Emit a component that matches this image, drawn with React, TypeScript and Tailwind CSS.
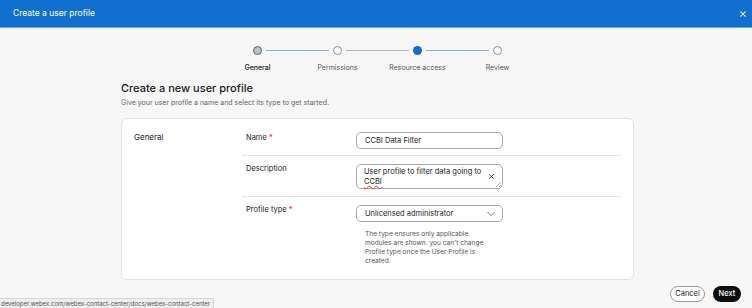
import React from "react";

const font = "font-['Inter','Noto_Sans',sans-serif]";

function Stepper() {
  const labels = [
    { t: "General", active: true },
    { t: "Permissions", active: false },
    { t: "Resource access", active: false },
    { t: "Review", active: false },
  ];
  return (
    <div className="flex flex-col items-center pt-[17px] pl-[3px]">
      <div className="flex items-center h-[10px]">
        <div className="w-[9px] h-[9px] rounded-full bg-[#b9c0ca] border border-[#5d6470]" />
        <div className="w-[63px] h-px bg-[#86aed8] mx-[4px]" />
        <div className="w-[9px] h-[9px] rounded-full bg-white border border-[#8c8c8c]" />
        <div className="w-[63px] h-px bg-[#b5b5b5] mx-[4px]" />
        <div className="w-[9px] h-[9px] rounded-full bg-[#1170cf]" />
        <div className="w-[63px] h-px bg-[#86aed8] mx-[4px]" />
        <div className="w-[9px] h-[9px] rounded-full bg-white border border-[#8c8c8c]" />
      </div>
      <div className="flex mt-[8px]">
        {labels.map((l) => (
          <div
            key={l.t}
            className={`w-[80px] text-center text-[7px] leading-[9px] ${
              l.active ? "text-[#1a1a1a] font-medium" : "text-[#555]"
            }`}
          >
            {l.t}
          </div>
        ))}
      </div>
    </div>
  );
}

export default function App() {
  return (
    <div className={`relative w-[752px] h-[308px] overflow-hidden bg-[#f7f7f7] ${font}`}>
      <div className="h-[28px] bg-[#1170cf] border-b border-[#6aa8e6] flex items-center justify-between pl-[13px] pr-[5px]">
        <span className="text-white text-[8.5px] leading-none">Create a user profile</span>
        <svg width="8" height="8" viewBox="0 0 10 10" className="mt-[1px]">
          <path d="M2 2 L8 8 M8 2 L2 8" stroke="#dbe9f8" strokeWidth="1.3" strokeLinecap="round" />
        </svg>
      </div>

      <Stepper />

      <div className="w-[513px] ml-[121px] mt-[9px]">
        <div className="text-[11px] leading-[14px] font-medium text-[#1a1a1a]">Create a new user profile</div>
        <div className="text-[7px] leading-[10px] text-[#666] mt-[3px]">
          Give your user profile a name and select its type to get started.
        </div>

        <div className="mt-[10px] h-[162px] bg-white border border-[#e3e3e3] rounded-[6px] flex">
          <div className="w-[120px] pl-[12px] pt-[13px] text-[8px] leading-[10px] text-[#1a1a1a]">General</div>
          <div className="flex-1 pr-[12px] pt-[5px]">
            <div className="flex pt-[8px] pb-[6px] border-b border-[#e6e6e6] pl-[4px]">
              <div className="w-[110px] pt-[1px] text-[7.5px] leading-[10px] text-[#1a1a1a]">
                Name <span className="text-[#d4262c]">*</span>
              </div>
              <div className="w-[147px] h-[17px] border border-[#a8a8a8] rounded-[5px] flex items-center px-[8px] text-[7.5px] text-[#1a1a1a]">
                CCBI Data Filter
              </div>
            </div>
            <div className="flex pt-[8px] pb-[7px] border-b border-[#e6e6e6] pl-[4px]">
              <div className="w-[110px] text-[7.5px] leading-[10px] text-[#1a1a1a]">Description</div>
              <div className="relative w-[147px] h-[25px] border border-[#a8a8a8] rounded-[5px] pl-[7px] pr-[20px] pt-[2px] text-[7.5px] leading-[10px] text-[#1a1a1a]">
                User profile to filter data going to{" "}
                <span className="underline decoration-wavy decoration-[#e0342f] decoration-[0.7px] underline-offset-[1px]">CCBI</span>
                <svg width="7" height="7" viewBox="0 0 10 10" className="absolute right-[7px] top-[8px]">
                  <path d="M2 2 L8 8 M8 2 L2 8" stroke="#333" strokeWidth="1.2" strokeLinecap="round" />
                </svg>
                <svg width="6" height="6" viewBox="0 0 6 6" className="absolute right-[1px] bottom-[1px]">
                  <path d="M6 1 L1 6 M6 4 L4 6" stroke="#999" strokeWidth="0.8" />
                </svg>
              </div>
            </div>
            <div className="flex pt-[8px] pl-[4px]">
              <div className="w-[110px] text-[7.5px] leading-[10px] text-[#1a1a1a]">
                Profile type <span className="text-[#d4262c]">*</span>
              </div>
              <div className="flex flex-col">
                <div className="w-[147px] h-[17px] border border-[#a8a8a8] rounded-[5px] flex items-center justify-between pl-[8px] pr-[7px] text-[7.5px] text-[#1a1a1a]">
                  <span>Unlicensed administrator</span>
                  <svg width="8" height="6" viewBox="0 0 10 6">
                    <path d="M1 1 L5 5 L9 1" stroke="#555" strokeWidth="1" fill="none" strokeLinecap="round" strokeLinejoin="round" />
                  </svg>
                </div>
                <div className="w-[140px] pl-[9px] mt-[8px] text-[6.6px] leading-[9px] text-[#555]">
                  The type ensures only applicable modules are shown. you can't change Profile type once the User Profile is created.
                </div>
              </div>
            </div>
          </div>
        </div>
      </div>

      <div className="flex justify-end gap-[8px] pr-[11px] mt-[6px]">
        <button className="w-[35px] h-[16px] rounded-full border border-[#9a9a9a] bg-white text-[7.5px] text-[#1a1a1a] flex items-center justify-center">
          Cancel
        </button>
        <button className="w-[28px] h-[16px] rounded-full bg-[#0d0d0d] text-[7.5px] font-medium text-white flex items-center justify-center">
          Next
        </button>
      </div>

      <div className="absolute left-0 bottom-0 h-[10px] pl-[1px] pr-[3px] bg-[#eeeeee] border-t border-r border-[#d6d6d6] text-[6px] leading-[9px] text-[#555] rounded-tr-[2px]">
        developer.webex.com/webex-contact-center/docs/webex-contact-center
      </div>
    </div>
  );
}
